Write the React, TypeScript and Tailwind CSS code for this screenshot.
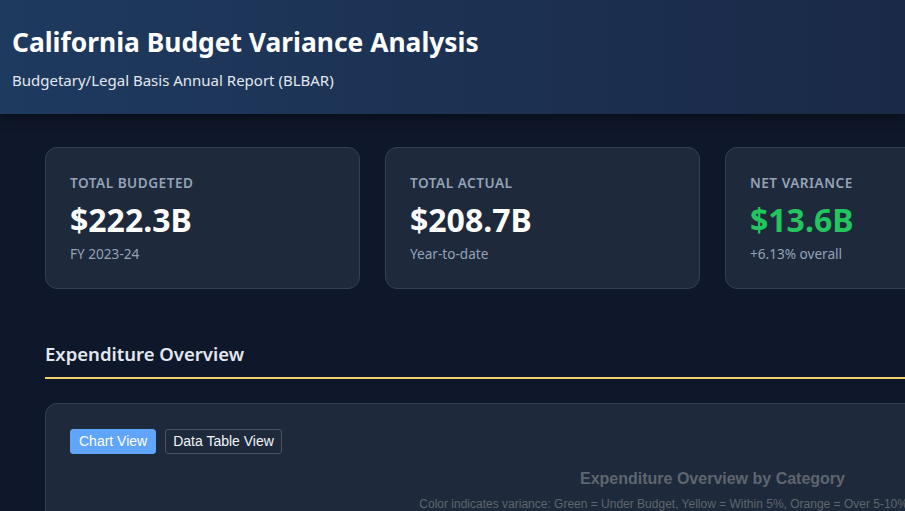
import { useState } from 'react'

const STATS = [
  { label: 'Total Budgeted', value: '$222.3B', note: 'FY 2023-24', tone: 'text-white' },
  { label: 'Total Actual', value: '$208.7B', note: 'Year-to-date', tone: 'text-white' },
  { label: 'Net Variance', value: '$13.6B', note: '+6.13% overall', tone: 'text-[#22c55e]' },
  { label: 'Departments', value: '142', note: 'Reporting entities', tone: 'text-white' },
]

export default function App() {
  const [view, setView] = useState<'chart' | 'table'>('chart')

  return (
    <div className="min-h-screen w-full overflow-hidden bg-[#0f172a] font-['Noto_Sans','Open_Sans',sans-serif]">
      {/* Header */}
      <header className="h-[114px] bg-linear-to-r from-[#1e3a5f] to-[#1a2947] px-3 pt-[24px] shadow-[0_4px_12px_rgba(0,0,0,0.45)]">
        <h1 className="text-[26.4px] leading-[36px] font-bold text-white">
          California Budget Variance Analysis
        </h1>
        <p className="mt-[10px] text-[15px] leading-[20px] text-[#e2e8f0]">
          Budgetary/Legal Basis Annual Report (BLBAR)
        </p>
      </header>

      <main className="w-[1425px] px-[45px] pt-[33px]">
        {/* Summary cards */}
        <div className="grid grid-cols-4 gap-[25px]">
          {STATS.map((s) => (
            <div
              key={s.label}
              className="h-[142px] rounded-xl border border-[#334155] bg-[#1e293b] px-[24px] pt-[26px]"
            >
              <span className="block w-fit text-[13.6px] leading-[18px] font-semibold tracking-[0.5px] uppercase text-[#94a3b8]">
                {s.label}
              </span>
              <span className={`mt-[8px] block w-fit text-[32px] leading-[40px] font-bold ${s.tone}`}>
                {s.value}
              </span>
              <span className="mt-[5px] block w-fit text-[13.6px] leading-[18px] text-[#94a3b8]">
                {s.note}
              </span>
            </div>
          ))}
        </div>

        {/* Section heading */}
        <h2 className="mt-[52px] text-[18.5px] leading-[26px] font-semibold text-[#e2e8f0]">
          Expenditure Overview
        </h2>
        <div className="mt-[10px] h-[2px] bg-[#f4d06f]" />

        {/* Chart panel */}
        <div className="mt-[24px] h-[400px] rounded-xl border border-[#334155] bg-[#1e293b] px-[24px] pt-[25px] font-['Liberation_Sans',Arial,sans-serif]">
          <div className="flex gap-[9px]">
            <button
              onClick={() => setView('chart')}
              className={`h-[25px] rounded-[3px] border px-[8px] text-[14px] ${
                view === 'chart'
                  ? 'border-[#60a5fa] bg-[#60a5fa] text-white'
                  : 'border-[#475569] text-[#f1f5f9]'
              }`}
            >
              Chart View
            </button>
            <button
              onClick={() => setView('table')}
              className={`h-[25px] rounded-[3px] border px-[7px] text-[14px] ${
                view === 'table'
                  ? 'border-[#60a5fa] bg-[#60a5fa] text-white'
                  : 'border-[#475569] text-[#f1f5f9]'
              }`}
            >
              Data Table View
            </button>
          </div>
          <div className="mt-[15px] text-center text-[16px] leading-[20px] font-bold text-[#5f6570]">
            Expenditure Overview by Category
          </div>
          <div className="mt-[8px] pr-[2px] text-center text-[12px] leading-[14px] text-[#5f6570]">
            Color indicates variance: Green = Under Budget, Yellow = Within 5%, Orange = Over 5-10%, Red = Over 10%
          </div>
        </div>
      </main>
    </div>
  )
}
